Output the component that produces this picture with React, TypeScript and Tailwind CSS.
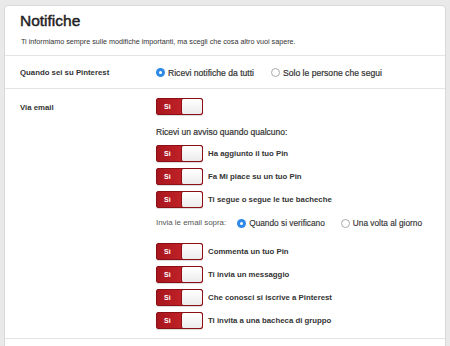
import React from "react";

const font = { fontFamily: '"Liberation Sans", Arial, sans-serif' };

function Toggle() {
  return (
    <div className="flex w-[47px] h-[17px] shrink-0 rounded-[2px] border border-[#8a1016] bg-gradient-to-r from-[#a8161d] to-[#d42a31] overflow-hidden shadow-[0_1px_1px_rgba(0,0,0,0.15)]">
      <span className="flex-1 flex items-center pl-[7px] text-[7px] font-bold text-white leading-none">Sì</span>
      <span className="w-[21px] h-full bg-gradient-to-b from-white to-[#ececec] border-l border-[#8a1016] rounded-[2px]" />
    </div>
  );
}

function Radio({ on, label, className = "", small }: { on?: boolean; label: string; className?: string; small?: boolean }) {
  return (
    <div className={"flex items-center " + className}>
      {on ? (
        <span className="w-[9px] h-[9px] rounded-full bg-[#2f8ae5] flex items-center justify-center">
          <span className="w-[3px] h-[3px] rounded-full bg-white" />
        </span>
      ) : (
        <span className="w-[9px] h-[9px] rounded-full border border-[#aaa] bg-white" />
      )}
      <span
        className={
          small
            ? "ml-[3px] text-[8.3px] text-[#333] leading-[12px] [-webkit-text-stroke:0.15px_#333]"
            : "ml-[3px] text-[8.6px] text-[#333] leading-[12px] [-webkit-text-stroke:0.2px_#333]"
        }
      >
        {label}
      </span>
    </div>
  );
}

function ToggleRow({ label }: { label: string }) {
  return (
    <div className="flex items-center">
      <Toggle />
      <span className="ml-[5px] text-[7.8px] font-bold text-[#333] leading-[12px]">{label}</span>
    </div>
  );
}

export default function App() {
  return (
    <div className="w-[450px] h-[346px] bg-[#e9e9e9] pt-[5px] px-[4px] overflow-hidden" style={font}>
      <div className="bg-white rounded-t-[4px] border border-[#d9d9d9] h-[400px]">
        <div className="pl-[15px] pt-[6px] pb-[8px] border-b border-[#e4e4e4]">
          <h1 className="text-[15.5px] leading-[18px] text-[#222] font-normal [-webkit-text-stroke:0.45px_#222]">Notifiche</h1>
          <p className="mt-[7px] ml-[1px] text-[7.2px] leading-[10px] text-[#333]">
            Ti informiamo sempre sulle modifiche importanti, ma scegli che cosa altro vuoi sapere.
          </p>
        </div>
        <div className="grid grid-cols-[151px_1fr] items-center h-[33px] border-b border-[#e4e4e4]">
          <div className="pl-[15px] pt-[1px] text-[7.8px] font-bold text-[#333]">Quando sei su Pinterest</div>
          <div className="flex items-center pt-[1px]">
            <Radio on label="Ricevi notifiche da tutti" />
            <Radio label="Solo le persone che segui" className="ml-[17px]" />
          </div>
        </div>
        <div className="grid grid-cols-[151px_1fr] border-b border-[#e4e4e4] pt-[9px] pb-[9px]">
          <div className="pl-[15px] pt-[4px] text-[7.8px] font-bold text-[#333] leading-[12px]">Via email</div>
          <div className="flex flex-col">
            <Toggle />
            <div className="mt-[11px] text-[8.5px] text-[#333] leading-[12px] [-webkit-text-stroke:0.2px_#333]">Ricevi un avviso quando qualcuno:</div>
            <div className="mt-[7px] flex flex-col gap-[6px]">
              <ToggleRow label="Ha aggiunto il tuo Pin" />
              <ToggleRow label="Fa Mi piace su un tuo Pin" />
              <ToggleRow label="Ti segue o segue le tue bacheche" />
            </div>
            <div className="mt-[9px] flex items-center h-[12px]">
              <span className="text-[7.9px] text-[#555]">Invia le email sopra:</span>
              <Radio small on label="Quando si verificano" className="ml-[11px]" />
              <Radio small label="Una volta al giorno" className="ml-[16px]" />
            </div>
            <div className="mt-[14px] flex flex-col gap-[6px]">
              <ToggleRow label="Commenta un tuo Pin" />
              <ToggleRow label="Ti invia un messaggio" />
              <ToggleRow label="Che conosci si iscrive a Pinterest" />
              <ToggleRow label="Ti invita a una bacheca di gruppo" />
            </div>
          </div>
        </div>
      </div>
    </div>
  );
}
